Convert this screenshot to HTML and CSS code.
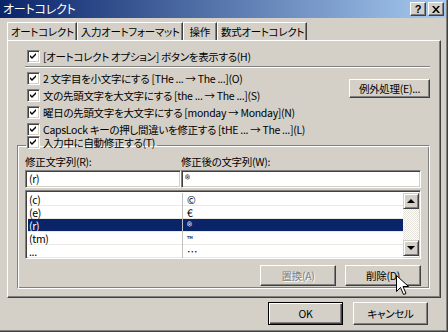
FILE: index.html
```html
<!DOCTYPE html>
<html lang="ja">
<head>
  <meta charset="UTF-8">
  <title>オートコレクト</title>
  <link rel="stylesheet" href="styles.css">
</head>
<body>
  <div class="dialog">
    <div class="titlebar">
      <span class="title">オートコレクト</span>
      <div class="caption-buttons">
        <span class="cap-btn">?</span>
        <span class="cap-btn">
          <svg width="8" height="7" viewBox="0 0 8 7"><path d="M0 0h2l2 2.5L6 0h2L5 3.5 8 7H6L4 4.5 2 7H0l3-3.5z" fill="#000"/></svg>
        </span>
      </div>
    </div>

    <div class="tabs">
      <div class="tab active">オートコレクト</div>
      <div class="tab">入力オートフォーマット</div>
      <div class="tab short">操作</div>
      <div class="tab">数式オートコレクト</div>
    </div>

    <div class="panel">
      <label class="check"><span class="box"></span>[オートコレクト オプション] ボタンを表示する(H)</label>
      <div class="sep"></div>

      <div class="options">
        <div class="option-list">
          <label class="check"><span class="box"></span>2 文字目を小文字にする [THe ... → The ...](O)</label>
          <label class="check"><span class="box"></span>文の先頭文字を大文字にする [the ... → The ...](S)</label>
          <label class="check"><span class="box"></span>曜日の先頭文字を大文字にする [monday → Monday](N)</label>
          <label class="check"><span class="box"></span>CapsLock キーの押し間違いを修正する [tHE ... → The ...](L)</label>
        </div>
        <div class="btn exceptions">例外処理(E)...</div>
      </div>

      <fieldset class="group">
        <legend><label class="check"><span class="box"></span>入力中に自動修正する(T)</label></legend>

        <div class="fields">
          <span class="field-label">修正文字列(R):</span>
          <span class="field-label">修正後の文字列(W):</span>
          <div class="input">(r)</div>
          <div class="input">®</div>
        </div>

        <div class="list">
          <div class="rows">
            <div class="row"><span class="c1">(c)</span><span class="c2">©</span></div>
            <div class="row"><span class="c1">(e)</span><span class="c2">€</span></div>
            <div class="row selected"><span class="c1">(r)</span><span class="c2">®</span></div>
            <div class="row"><span class="c1">(tm)</span><span class="c2 small">™</span></div>
            <div class="row"><span class="c1">...</span><span class="c2">…</span></div>
          </div>
          <div class="scrollbar">
            <div class="sb-btn"><span class="arrow up"></span></div>
            <div class="sb-track"></div>
            <div class="sb-btn"><span class="arrow down"></span></div>
          </div>
        </div>

        <div class="group-buttons">
          <div class="btn disabled">置換(A)</div>
          <div class="btn">削除(D)</div>
        </div>
      </fieldset>
    </div>

    <div class="footer">
      <div class="btn wide default">OK</div>
      <div class="btn wide">キャンセル</div>
    </div>

    <svg class="cursor" width="13" height="21" viewBox="0 0 13 21">
      <path d="M0.5 0.5v16l4-4 3 7 2.5-1-3-7h5.5z" fill="#fff" stroke="#000" stroke-width="1"/>
    </svg>
  </div>
</body>
</html>
```

FILE: styles.css
```css
* {
  box-sizing: border-box;
}
body {
  margin: 0;
  width: 448px;
  height: 332px;
  overflow: hidden;
  background: #d4d0c8;
  font-family: "Noto Sans CJK JP", "Liberation Sans", sans-serif;
  font-size: 10.5px;
  letter-spacing: -0.3px;
  font-feature-settings: "palt";
  color: #000;
}
.dialog {
  position: relative;
  height: 332px;
  background: #d4d0c8;
  border-right: 1px solid #404040;
  border-bottom: 1px solid #404040;
  box-shadow: inset -1px -1px 0 #808080;
}
.titlebar {
  height: 18px;
  margin-right: 1px;
  display: flex;
  align-items: center;
  justify-content: space-between;
  padding: 0 2px 0 3px;
  background: linear-gradient(to right, #0a246a, #a6caf0);
}
.title {
  color: #fff;
  font-size: 12px;
  letter-spacing: -0.2px;
  line-height: 18px;
}
.caption-buttons {
  display: flex;
  gap: 2px;
}
.cap-btn {
  width: 16px;
  height: 14px;
  display: flex;
  align-items: center;
  justify-content: center;
  background: #d4d0c8;
  border: 1px solid;
  border-color: #fff #404040 #404040 #fff;
  box-shadow: inset -1px -1px 0 #808080;
  font-family: "Liberation Sans", sans-serif;
  font-weight: bold;
  font-size: 11px;
  letter-spacing: 0;
  line-height: 1;
}
.tabs {
  display: flex;
  margin: 4px 0 0 7px;
  height: 18px;
}
.tab {
  height: 18px;
  padding: 0 2px 0 3px;
  line-height: 17px;
  border-left: 1px solid #fff;
  border-top: 1px solid #fff;
  border-right: 1px solid #404040;
  box-shadow: inset -1px 0 0 #808080;
  white-space: nowrap;
}
.tab.short {
  padding: 0 6px;
}
.panel {
  margin-left: 7px;
  width: 434px;
  height: 258px;
  border: 1px solid;
  border-color: #fff #404040 #404040 #fff;
  box-shadow: inset -1px -1px 0 #808080;
  padding: 7px 0 0 19px;
}
.check {
  display: flex;
  align-items: center;
  gap: 3px;
  height: 17px;
  white-space: nowrap;
}
.box {
  width: 13px;
  height: 13px;
  flex: none;
  background: #fff url("data:image/svg+xml,%3Csvg xmlns='http://www.w3.org/2000/svg' width='9' height='9'%3E%3Cpath d='M1 3l2 2 4-4v2l-4 4-2-2z' fill='%23000'/%3E%3C/svg%3E") 1px 1px no-repeat;
  border: 1px solid;
  border-color: #808080 #fff #fff #808080;
  box-shadow: inset 1px 1px 0 #404040, inset -1px -1px 0 #d4d0c8;
}
.sep {
  margin: 1px 10px 2px -2px;
  height: 2px;
  border-top: 1px solid #808080;
  border-bottom: 1px solid #fff;
}
.options {
  display: flex;
  justify-content: space-between;
  align-items: flex-start;
  padding-right: 10px;
}
.btn {
  height: 21px;
  display: flex;
  align-items: center;
  justify-content: center;
  background: #d4d0c8;
  border: 1px solid;
  border-color: #fff #404040 #404040 #fff;
  box-shadow: inset -1px -1px 0 #808080;
  white-space: nowrap;
}
.exceptions {
  width: 81px;
  height: 19px;
  margin-top: 9px;
}
.btn.disabled {
  color: #808080;
  text-shadow: 1px 1px 0 #fff;
}
.group {
  margin: -4px 10px 0 -10px;
  padding: 0 8px 0 7px;
  height: 155px;
  border: 1px solid;
  border-color: #808080 #fff #fff #808080;
  box-shadow: inset 1px 1px 0 #fff, inset -1px -1px 0 #808080;
}
.group legend {
  padding: 0 2px 6px 1px;
  margin-left: 1px;
}
.fields {
  display: grid;
  grid-template-columns: 156px 1fr;
  margin-top: -2px;
}
.field-label {
  height: 15px;
  line-height: 13px;
}
.input {
  height: 18px;
  padding-left: 3px;
  line-height: 15px;
  background: #fff;
  border: 1px solid;
  border-color: #808080 #fff #fff #808080;
  box-shadow: inset 1px 1px 0 #404040, inset -1px -1px 0 #d4d0c8;
}
.list {
  display: flex;
  margin-top: 2px;
  height: 69px;
  background: #fff;
  border: 1px solid;
  border-color: #808080 #fff #fff #808080;
  box-shadow: inset 1px 1px 0 #404040, inset -1px -1px 0 #d4d0c8;
  padding: 2px 1px 2px 2px;
}
.rows {
  flex: 1;
}
.row {
  display: flex;
  height: 13px;
  line-height: 13px;
  box-shadow: inset 0 -1px 0 #ece9e2;
}
.c1 {
  width: 155px;
  padding-left: 1px;
  border-right: 1px solid #c0c0c0;
}
.c2 {
  padding-left: 4px;
}
.c2.small {
  font-size: 8px;
}
.row.selected {
  background: #0a246a;
  color: #fff;
}
.scrollbar {
  width: 16px;
  display: flex;
  flex-direction: column;
}
.sb-btn {
  height: 16px;
  display: flex;
  align-items: center;
  justify-content: center;
  background: #d4d0c8;
  border: 1px solid;
  border-color: #d4d0c8 #404040 #404040 #d4d0c8;
  box-shadow: inset 1px 1px 0 #fff, inset -1px -1px 0 #808080;
}
.sb-track {
  flex: 1;
  background: repeating-conic-gradient(#fff 0 25%, #e6e3dc 0 50%) 0 0 / 2px 2px;
}
.arrow {
  width: 0;
  height: 0;
  border-left: 4px solid transparent;
  border-right: 4px solid transparent;
}
.arrow.up {
  border-bottom: 4px solid #000;
}
.arrow.down {
  border-top: 4px solid #000;
}
.group-buttons {
  display: flex;
  justify-content: flex-end;
  gap: 9px;
  margin-top: 6px;
}
.group-buttons .btn {
  width: 76px;
}
.footer {
  display: flex;
  justify-content: flex-end;
  gap: 10px;
  padding: 4px 19px 0 0;
}
.btn.wide {
  width: 75px;
  height: 23px;
}
.btn.default {
  border: 1px solid #000;
  box-shadow: inset 1px 1px 0 #fff, inset -1px -1px 0 #404040, inset -2px -2px 0 #808080;
}
.cursor {
  position: absolute;
  left: 396px;
  top: 275px;
}
```
